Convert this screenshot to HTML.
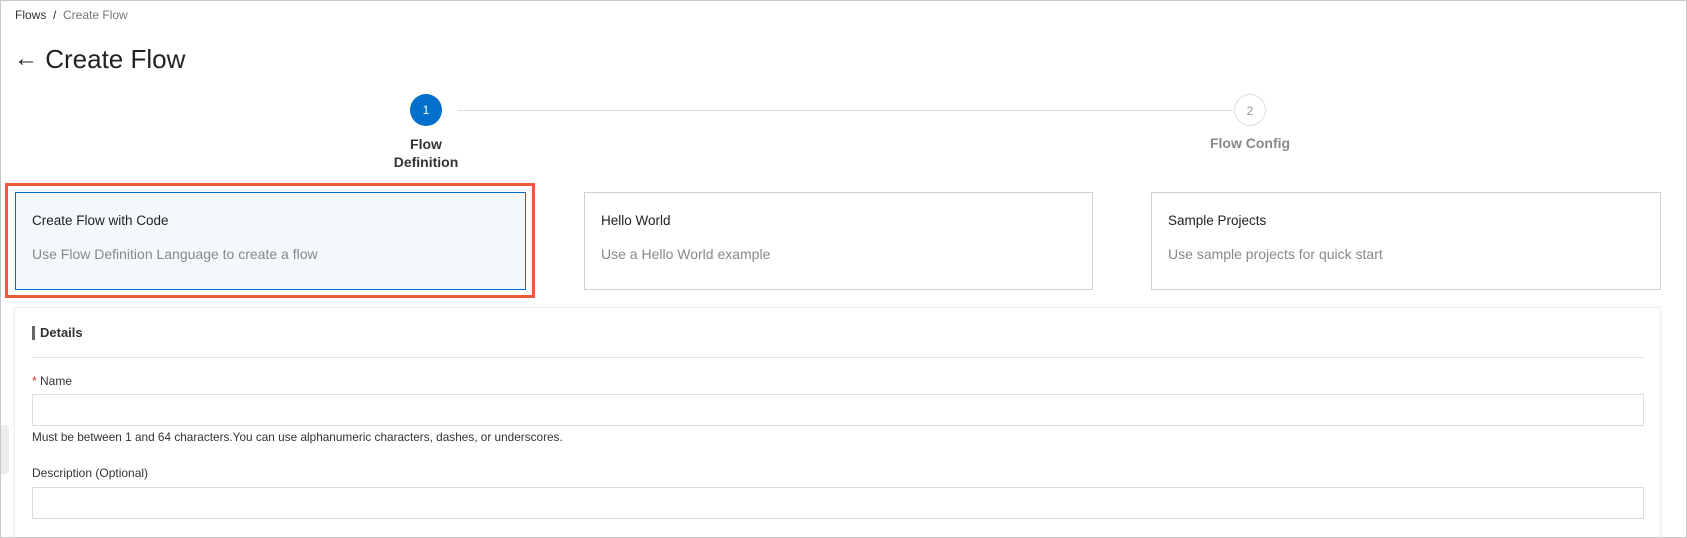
<!DOCTYPE html>
<html><head><meta charset="utf-8"><style>
*{box-sizing:border-box;margin:0;padding:0}
html{overflow:hidden;width:1687px;height:538px}
body{width:1687px;height:538px;overflow:hidden;background:#fff;font-family:"Liberation Sans",sans-serif;color:#333;position:relative}
.frame{position:absolute;left:0;top:0;width:1687px;height:538px;border:1px solid #c8c8c8;z-index:5}
.abs{position:absolute;white-space:nowrap}
.crumb{left:15px;top:8px;font-size:12px;color:#333}
.crumb span{color:#777}
.title{left:14px;top:44px;font-size:26px;color:#222}
.circ{position:absolute;width:32px;height:32px;border-radius:50%;text-align:center;line-height:32px;font-size:12px}
.card{position:absolute;top:192px;height:98px;border:1px solid #cfcfcf;background:#fff}
.card .t{position:absolute;left:16px;top:20px;font-size:13.5px;color:#222}
.card .d{position:absolute;left:16px;top:53px;font-size:14px;color:#888}
.inp{position:absolute;left:32px;width:1612px;height:32px;border:1px solid #ddd}
</style></head><body>
<div class="frame"></div>
<div class="abs crumb">Flows &nbsp;/&nbsp; <span>Create Flow</span></div>
<div class="abs title"><span style="font-size:24px;position:relative;top:-2px">&#8592;</span> Create Flow</div>

<div style="position:absolute;left:458px;top:110px;width:775px;height:1px;background:#ddd"></div>
<div class="circ" style="left:410px;top:94px;background:#0070cc;color:#fff">1</div>
<div class="circ" style="left:1234px;top:94px;border:1px solid #ddd;color:#999;background:#fff">2</div>
<div class="abs" style="left:376px;top:135px;width:100px;text-align:center;font-size:14px;font-weight:bold;color:#333;line-height:18px">Flow<br>Definition</div>
<div class="abs" style="left:1190px;top:135px;width:120px;text-align:center;font-size:14px;font-weight:bold;color:#888">Flow Config</div>

<div style="position:absolute;left:5px;top:183px;width:530px;height:115px;border:3px solid #ea5a3c"></div>
<div class="card" style="left:15px;width:511px;border:1px solid #0070cc;background:#f2f8fc"><div class="t">Create Flow with Code</div><div class="d">Use Flow Definition Language to create a flow</div></div>
<div class="card" style="left:584px;width:509px"><div class="t">Hello World</div><div class="d">Use a Hello World example</div></div>
<div class="card" style="left:1151px;width:510px"><div class="t">Sample Projects</div><div class="d">Use sample projects for quick start</div></div>

<div style="position:absolute;left:14px;top:307px;width:1647px;height:231px;border:1px solid #eee;border-bottom:none;box-shadow:0 0 3px rgba(0,0,0,.06)"></div>
<div style="position:absolute;left:32px;top:326px;width:3px;height:14px;background:#666"></div>
<div class="abs" style="left:40px;top:325px;font-size:13px;font-weight:bold;color:#333">Details</div>
<div style="position:absolute;left:32px;top:357px;width:1612px;height:1px;background:#e3e3e3"></div>
<div class="abs" style="left:32px;top:374px;font-size:12px;color:#333"><span style="color:#d93026">*</span> Name</div>
<div class="inp" style="top:394px"></div>
<div class="abs" style="left:32px;top:430px;font-size:11.8px;color:#333">Must be between 1 and 64 characters.You can use alphanumeric characters, dashes, or underscores.</div>
<div class="abs" style="left:32px;top:466px;font-size:12px;color:#333">Description (Optional)</div>
<div class="inp" style="top:487px"></div>
<div style="position:absolute;left:0;top:425px;width:9px;height:49px;background:#eee;border-radius:0 3px 3px 0"></div>
</body></html>
